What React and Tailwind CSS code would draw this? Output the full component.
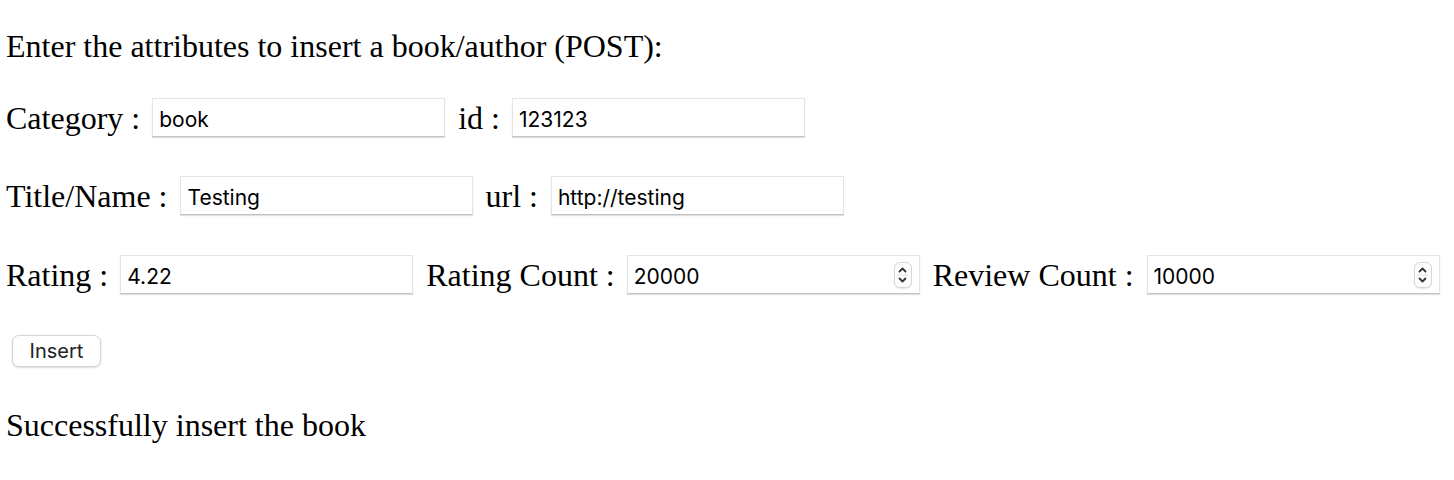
import React, { useState } from 'react';

const serif = "font-['Liberation_Serif','Times_New_Roman',serif]";
const sans = "font-['Inter','Liberation_Sans',Arial,sans-serif]";

const Spinner = () => (
    <div className="absolute right-[8px] top-1/2 -translate-y-1/2 w-[18px] h-[26px] rounded-[6px] border border-[#d6d6d6] bg-white flex flex-col items-center justify-center shadow-[0_1px_1px_rgba(0,0,0,0.08)]">
        <svg width="11" height="22" viewBox="0 0 11 22" fill="none" stroke="#333" strokeWidth="1.8" strokeLinecap="round" strokeLinejoin="round">
            <path d="M2.5 7.5 L5.5 4.5 L8.5 7.5" />
            <path d="M0 11 L11 11" stroke="#e2e2e2" strokeWidth="1" />
            <path d="M2.5 14.5 L5.5 17.5 L8.5 14.5" />
        </svg>
    </div>
);

const Field = ({ value, onChange, number }) => (
    <div className="relative w-[293px] h-[39px] shrink-0">
        <input
            type="text"
            value={value}
            onChange={(e) => onChange(e.target.value)}
            className={`w-full h-full bg-white border border-[#e4e4e4] border-b-[#c2c2c2] shadow-[0_1px_1px_rgba(0,0,0,0.12)] pl-[6px] pr-[30px] pt-[4px] text-[21px] text-black outline-none ${sans}`}
        />
        {number && <Spinner />}
    </div>
);

const Label = ({ children, className = '' }) => (
    <span className={`whitespace-pre text-[32px] leading-[36px] text-black ${className}`}>{children}</span>
);

export default function App() {
    const [form, setForm] = useState({
        category: 'book',
        id: '123123',
        title: 'Testing',
        url: 'http://testing',
        rating: '4.22',
        ratingCount: '20000',
        reviewCount: '10000'
    });

    const set = (key) => (v) => setForm({ ...form, [key]: v });

    return (
        <div className={`w-[1454px] h-[480px] bg-white pl-[6px] pt-[28px] flex flex-col ${serif}`}>
            <Label>Enter the attributes to insert a book/author (POST):</Label>

            <div className="mt-[34px] flex items-center">
                <Label className="mr-[12px]">Category :</Label>
                <Field value={form.category} onChange={set('category')} />
                <Label className="ml-[13px] mr-[12px]">id :</Label>
                <Field value={form.id} onChange={set('id')} />
            </div>

            <div className="mt-[39px] flex items-center">
                <Label className="mr-[13px]">Title/Name :</Label>
                <Field value={form.title} onChange={set('title')} />
                <Label className="ml-[12px] mr-[13px]">url :</Label>
                <Field value={form.url} onChange={set('url')} />
            </div>

            <div className="mt-[40px] flex items-center">
                <Label className="mr-[12px]">Rating :</Label>
                <Field value={form.rating} onChange={set('rating')} />
                <Label className="ml-[13px] mr-[12px]">Rating Count :</Label>
                <Field value={form.ratingCount} onChange={set('ratingCount')} number />
                <Label className="ml-[13px] mr-[13px]">Review Count :</Label>
                <Field value={form.reviewCount} onChange={set('reviewCount')} number />
            </div>

            <div className="mt-[41px]">
                <button
                    type="button"
                    className={`ml-[6px] w-[89px] h-[32px] bg-white border border-[#d4d4d4] rounded-[7px] shadow-[0_1px_2px_rgba(0,0,0,0.15)] text-[20px] text-[#222] ${sans}`}
                >
                    Insert
                </button>
            </div>

            <Label className="mt-[40px]">Successfully insert the book</Label>
        </div>
    );
}
